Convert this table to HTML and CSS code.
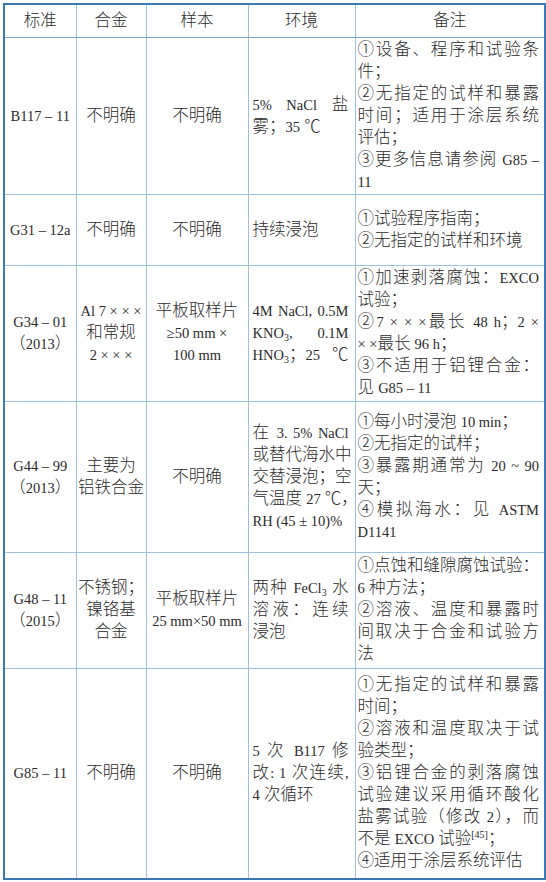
FILE: index.html
```html
<!DOCTYPE html>
<html lang="zh-CN">
<head>
<meta charset="utf-8">
<title>腐蚀试验标准</title>
<link rel="stylesheet" href="styles.css">
</head>
<body>
<table class="std">
  <colgroup>
    <col class="c1"><col class="c2"><col class="c3"><col class="c4"><col class="c5">
  </colgroup>
  <thead>
    <tr class="rh">
      <th>标准</th><th>合金</th><th>样本</th><th>环境</th><th>备注</th>
    </tr>
  </thead>
  <tbody>
    <tr class="r1">
      <td class="ctr"><span class="e">B117 – 11</span></td>
      <td class="ctr">不明确</td>
      <td class="ctr">不明确</td>
      <td class="env"><span class="ln j"><span class="e">5% NaCl</span> 盐</span><span class="ln">雾；<span class="e">35</span> ℃</span></td>
      <td class="note">
        <span class="ln j">①设备、程序和试验条</span><span class="ln">件；</span>
        <span class="ln j">②无指定的试样和暴露</span><span class="ln j">时间；适用于涂层系统</span><span class="ln">评估；</span>
        <span class="ln j">③更多信息请参阅 <span class="e">G85 –</span></span><span class="ln"><span class="e">11</span></span>
      </td>
    </tr>
    <tr class="r2">
      <td class="ctr"><span class="e">G31 – 12a</span></td>
      <td class="ctr">不明确</td>
      <td class="ctr">不明确</td>
      <td class="env"><span class="ln">持续浸泡</span></td>
      <td class="note"><span class="ln">①试验程序指南；</span><span class="ln">②无指定的试样和环境</span></td>
    </tr>
    <tr class="r3">
      <td class="ctr"><span class="ln"><span class="e">G34 – 01</span></span><span class="ln">（<span class="e">2013</span>）</span></td>
      <td class="ctr"><span class="ln"><span class="e">Al 7 × × ×</span></span><span class="ln">和常规</span><span class="ln"><span class="e">2 × × ×</span></span></td>
      <td class="ctr"><span class="ln">平板取样片</span><span class="ln"><span class="e">≥50 mm ×</span></span><span class="ln"><span class="e">100 mm</span></span></td>
      <td class="env"><span class="ln j"><span class="e">4M NaCl, 0.5M</span></span><span class="ln j"><span class="e">KNO<sub>3</sub>, 0.1M</span></span><span class="ln j"><span class="e">HNO<sub>3</sub></span>；<span class="e">25</span> ℃</span></td>
      <td class="note">
        <span class="ln j">①加速剥落腐蚀：<span class="e">EXCO</span></span><span class="ln">试验；</span>
        <span class="ln j">②<span class="e">7 × × ×</span>最长 <span class="e">48 h</span>；<span class="e">2 ×</span></span><span class="ln"><span class="e">× ×</span>最长 <span class="e">96 h</span>；</span>
        <span class="ln j">③不适用于铝锂合金：</span><span class="ln">见 <span class="e">G85 – 11</span></span>
      </td>
    </tr>
    <tr class="r4">
      <td class="ctr"><span class="ln"><span class="e">G44 – 99</span></span><span class="ln">（<span class="e">2013</span>）</span></td>
      <td class="ctr"><span class="ln">主要为</span><span class="ln">铝铁合金</span></td>
      <td class="ctr">不明确</td>
      <td class="env"><span class="ln j">在 <span class="e">3. 5% NaCl</span></span><span class="ln j">或替代海水中</span><span class="ln j">交替浸泡；空</span><span class="ln j">气温度 <span class="e">27</span> ℃，</span><span class="ln"><span class="e">RH (45 ± 10)%</span></span></td>
      <td class="note">
        <span class="ln">①每小时浸泡 <span class="e">10 min</span>；</span><span class="ln">②无指定的试样；</span>
        <span class="ln j">③暴露期通常为 <span class="e">20 ~ 90</span></span><span class="ln">天；</span>
        <span class="ln j">④模拟海水：见 <span class="e">ASTM</span></span><span class="ln"><span class="e">D1141</span></span>
      </td>
    </tr>
    <tr class="r5">
      <td class="ctr"><span class="ln"><span class="e">G48 – 11</span></span><span class="ln">（<span class="e">2015</span>）</span></td>
      <td class="ctr"><span class="ln">不锈钢；</span><span class="ln">镍铬基</span><span class="ln">合金</span></td>
      <td class="ctr"><span class="ln">平板取样片</span><span class="ln"><span class="e">25 mm×50 mm</span></span></td>
      <td class="env"><span class="ln j">两种 <span class="e">FeCl<sub>3</sub></span> 水</span><span class="ln j">溶液：连续</span><span class="ln">浸泡</span></td>
      <td class="note">
        <span class="ln j">①点蚀和缝隙腐蚀试验：</span><span class="ln"><span class="e">6</span> 种方法；</span>
        <span class="ln j">②溶液、温度和暴露时</span><span class="ln j">间取决于合金和试验方</span><span class="ln">法</span>
      </td>
    </tr>
    <tr class="r6">
      <td class="ctr"><span class="e">G85 – 11</span></td>
      <td class="ctr">不明确</td>
      <td class="ctr">不明确</td>
      <td class="env"><span class="ln j"><span class="e">5</span> 次 <span class="e">B117</span> 修</span><span class="ln j">改<span class="e">: 1</span> 次连续<span class="e">,</span></span><span class="ln"><span class="e">4</span> 次循环</span></td>
      <td class="note">
        <span class="ln j">①无指定的试样和暴露</span><span class="ln">时间；</span>
        <span class="ln j">②溶液和温度取决于试</span><span class="ln">验类型；</span>
        <span class="ln j">③铝锂合金的剥落腐蚀</span><span class="ln j">试验建议采用循环酸化</span><span class="ln j">盐雾试验（修改 <span class="e">2</span>），而</span><span class="ln">不是 <span class="e">EXCO</span> 试验<sup class="e">[45]</sup>；</span>
        <span class="ln">④适用于涂层系统评估</span>
      </td>
    </tr>
  </tbody>
</table>
</body>
</html>
```

FILE: styles.css
```css
html, body {
  margin: 0;
  padding: 0;
  background: #ffffff;
}

body {
  padding: 3px 2px 0 3px;
  font-family: "Liberation Serif", "Noto Sans CJK SC", serif;
  font-size: 16.5px;
  font-weight: 300;
  line-height: 22px;
  color: #2a2a2a;
}

.std {
  width: 541px;
  table-layout: fixed;
  border-collapse: collapse;
  border: 2px solid #3a79b3;
}

.c1 { width: 72px; }
.c2 { width: 70px; }
.c3 { width: 102px; }
.c4 { width: 107px; }
.c5 { width: 190px; }

.std th,
.std td {
  border: 1px solid #9dc0dc;
  vertical-align: middle;
  padding: 0;
  font-weight: 300;
}

.std th {
  text-align: center;
  border-bottom-color: #7aa7cc;
}

.rh { height: 33px; }
.r1 { height: 157px; }
.r2 { height: 71px; }
.r3 { height: 136px; }
.r4 { height: 151px; }
.r5 { height: 116px; }
.r6 { height: 211px; }

.std td.ctr {
  text-align: center;
  padding: 0 1px;
}

.std td.env {
  padding: 0 6px 0 4px;
  text-align: left;
}

.std td.note {
  padding: 0 5px 0 2px;
  text-align: left;
}

.ln {
  display: block;
  white-space: nowrap;
}

.ln.j {
  text-align: justify;
  text-align-last: justify;
}

.e {
  font-size: 14.5px;
  font-weight: 400;
}

sub {
  font-size: 10px;
  line-height: 0;
  vertical-align: -3px;
}

sup.e {
  font-size: 10px;
  line-height: 0;
  vertical-align: 6px;
}
```
